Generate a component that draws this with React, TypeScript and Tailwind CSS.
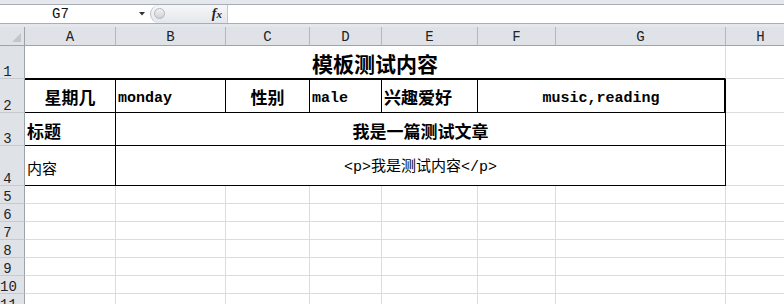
import React from 'react'

const cols = ['A', 'B', 'C', 'D', 'E', 'F', 'G', 'H']
const cjk = "font-['Noto_Sans_CJK_SC',sans-serif]"
const mono = "font-['Liberation_Mono','Noto_Sans_CJK_SC',monospace]"

const RowHead = ({ n }: { n: number }) => (
  <div className="flex items-end bg-[#dfe3e8] border-r border-b border-r-[#9ea3a9] border-b-[#c6cacf]">
    <span className={`w-[15px] text-center text-[14px] leading-[12px] text-[#222] ${mono}`}>{n}</span>
  </div>
)

const Grid = () => <div className="border-r border-b border-[#dadcdd]" />

const FormulaBar = () => (
  <div className="flex flex-col">
    <div className="h-[4px] bg-[#e4e7eb]" />
    <div className="h-px bg-[#a7aeb6]" />
    <div className="flex h-[18px] bg-white">
      <div className="flex w-[150px] items-center">
        <div className={`w-[121px] text-center text-[14px] leading-none text-[#111] ${mono}`}>G7</div>
        <svg width="6" height="4" viewBox="0 0 6 4" className="ml-[18px]">
          <path d="M0 0 L6 0 L3 3.5 Z" fill="#333" />
        </svg>
      </div>
      <div className="relative flex w-[77px] items-center justify-end rounded-l-[9px] border-l border-[#b9bec5] bg-gradient-to-b from-[#f6f7f9] to-[#e4e7eb] pr-[5px]">
        <div className="absolute left-[3px] top-[3px] h-[11px] w-[11px] rounded-full border border-[#b3b7bd] bg-gradient-to-b from-[#f2f2f2] to-[#cfd2d6]" />
        <span className="font-['Liberation_Serif',serif] text-[14px] font-bold italic leading-none text-[#222]">
          f<span className="text-[11px]">x</span>
        </span>
      </div>
      <div className="w-px bg-[#c3c8ce]" />
      <div className="flex-1 bg-white" />
    </div>
    <div className="h-px bg-[#a7aeb6]" />
    <div className="h-[3px] bg-[#e4e7eb]" />
  </div>
)

export default function App() {
  return (
    <div className="h-[304px] w-[784px] overflow-hidden bg-white">
      <FormulaBar />
      <div className="grid w-[796px] grid-cols-[25px_91px_110px_84px_72px_96px_78px_170px_70px] grid-rows-[19px_33px_34px_33px_40px_repeat(7,18px)]">
        {/* header row */}
        <div className="relative border-r border-b border-[#9ea3a9] bg-[#dfe3e8]">
          <svg width="9" height="9" viewBox="0 0 9 9" className="absolute left-[12px] top-[6px]">
            <path d="M9 0 L9 9 L0 9 Z" fill="#c3c7cc" />
          </svg>
        </div>
        {cols.map((c) => (
          <div
            key={c}
            className={`flex items-center justify-center border-r border-b border-r-[#b4b8bd] border-b-[#9ea3a9] bg-[#dfe3e8] pt-px text-[14px] leading-none text-[#222] ${mono}`}
          >
            {c}
          </div>
        ))}

        {/* row 1 */}
        <RowHead n={1} />
        <div className={`col-span-7 flex items-center justify-center border-r border-b border-r-[#dadcdd] border-b-black pt-[3px] text-[21px] font-bold leading-none text-black ${cjk}`}>
          模板测试内容
        </div>
        <Grid />

        {/* row 2 */}
        <RowHead n={2} />
        <div className={`flex items-center justify-center border-t border-r border-b border-black pt-px text-[17px] font-bold leading-none ${cjk}`}>
          星期几
        </div>
        <div className={`flex items-center border-t border-r border-b border-black pl-[2px] pt-[4px] text-[15px] font-bold leading-none ${mono}`}>
          monday
        </div>
        <div className={`flex items-center justify-center border-t border-r border-b border-black pt-px text-[17px] font-bold leading-none ${cjk}`}>
          性别
        </div>
        <div className={`flex items-center border-t border-r border-b border-black pl-[2px] pt-[4px] text-[15px] font-bold leading-none ${mono}`}>
          male
        </div>
        <div className={`flex items-center border-t border-r border-b border-black pl-[2px] pt-px text-[17px] font-bold leading-none ${cjk}`}>
          兴趣爱好
        </div>
        <div className={`col-span-2 flex items-center justify-center border-t border-r-2 border-b border-black pt-[4px] text-[15px] font-bold leading-none ${mono}`}>
          music,reading
        </div>
        <Grid />

        {/* row 3 */}
        <RowHead n={3} />
        <div className={`flex items-center border-r border-b border-black pl-[2px] pt-[2px] text-[17px] font-bold leading-none ${cjk}`}>
          标题
        </div>
        <div className={`col-span-6 flex items-center justify-center border-r border-b border-black pt-[2px] text-[17px] font-bold leading-none ${cjk}`}>
          我是一篇测试文章
        </div>
        <Grid />

        {/* row 4 */}
        <RowHead n={4} />
        <div className={`flex items-center border-r border-b border-black pl-[2px] pt-[3px] text-[15px] leading-none ${cjk}`}>
          内容
        </div>
        <div className={`col-span-6 flex items-center justify-center border-r border-b border-black pt-[3px] text-[15px] leading-none ${mono}`}>
          &lt;p&gt;我是测试内容&lt;/p&gt;
        </div>
        <Grid />

        {/* empty rows */}
        {[5, 6, 7, 8, 9, 10, 11].map((n) => (
          <React.Fragment key={n}>
            <RowHead n={n} />
            {cols.map((c) => (
              <Grid key={c} />
            ))}
          </React.Fragment>
        ))}
      </div>
    </div>
  )
}
